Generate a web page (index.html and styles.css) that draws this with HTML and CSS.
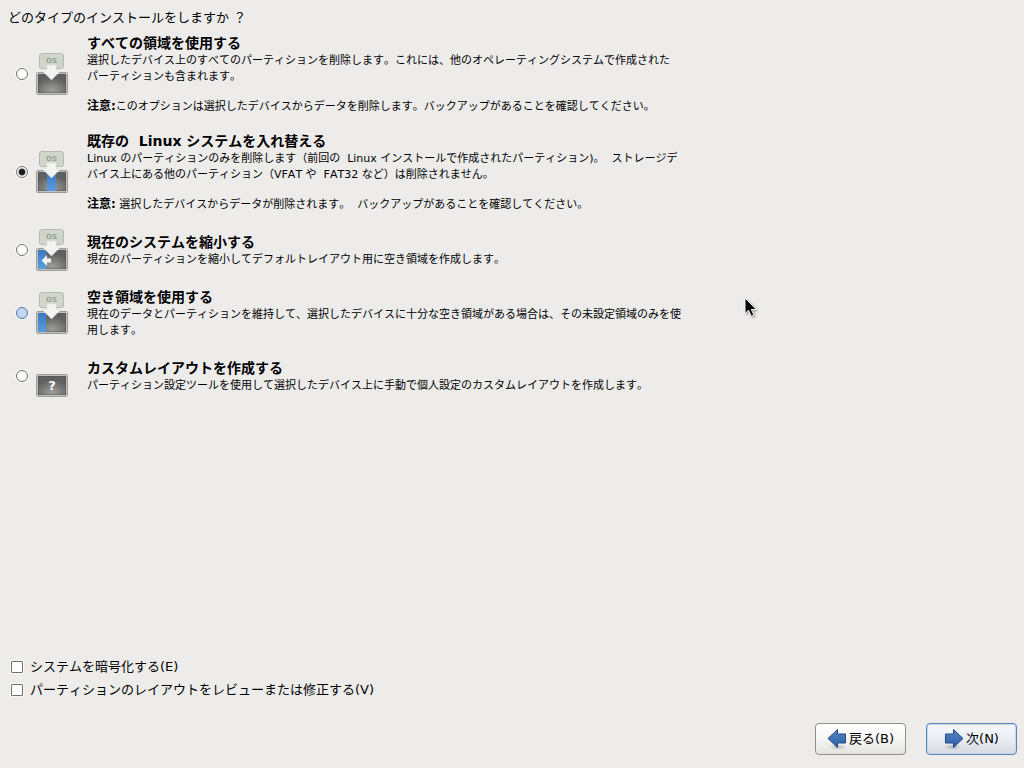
FILE: index.html
```html
<!DOCTYPE html>
<html lang="ja">
<head>
  <meta charset="UTF-8">
  <meta name="viewport" content="width=device-width, initial-scale=1.0">
  <title>インストールのタイプ</title>
  <link rel="stylesheet" href="styles.css">
</head>
<body>
  <!-- shared icon parts -->
  <svg class="defs" aria-hidden="true">
    <defs>
      <radialGradient id="disk-fill" cx="0.5" cy="0.85" r="0.65">
        <stop offset="0" stop-color="#9c9c9a"/>
        <stop offset="1" stop-color="#606060"/>
      </radialGradient>
      <linearGradient id="blue-fill" x1="0" y1="0" x2="0" y2="1">
        <stop offset="0" stop-color="#3a7ac0"/>
        <stop offset="1" stop-color="#5b9be0"/>
      </linearGradient>
      <linearGradient id="nav-fill" x1="0" y1="0" x2="0" y2="1">
        <stop offset="0" stop-color="#5585c2"/>
        <stop offset="1" stop-color="#2a5fa8"/>
      </linearGradient>
      <radialGradient id="nav-shadow">
        <stop offset="0" stop-color="#000" stop-opacity="0.22"/>
        <stop offset="1" stop-color="#000" stop-opacity="0"/>
      </radialGradient>
    </defs>
    <symbol id="disk" viewBox="0 0 32 42">
      <rect x="0.5" y="19.5" width="31" height="22" rx="1.5" fill="#f4f4f2" stroke="#9b9c98"/>
      <rect x="2" y="21" width="28" height="19" fill="url(#disk-fill)" stroke="#4c4c4c" stroke-width="0.6"/>
    </symbol>
    <symbol id="os" viewBox="0 0 32 42">
      <rect x="3.5" y="0.5" width="24" height="15" rx="2.5" fill="#d1d6cd" stroke="#b3bbae"/>
      <path d="M11 12h9v5.500h5L15.500 27 6 17.500h5z" fill="#f3f3f1" stroke="#dcdeda" stroke-width="0.5"/>
    </symbol>
  </svg>

  <main class="page">
    <h1 class="question">どのタイプのインストールをしますか ？</h1>

    <div class="options" role="radiogroup">
      <label class="option">
        <input type="radio" name="type" class="radio">
        <svg class="icon" viewBox="0 0 32 42"><use href="#disk"/><use href="#os"/><text x="15.5" y="10" text-anchor="middle" class="os-text">OS</text></svg>
        <span class="text">
          <span class="title">すべての領域を使用する</span>
          <span class="desc">選択したデバイス上のすべてのパーティションを削除します。これには、他のオペレーティングシステムで作成されたパーティションも含まれます。</span>
          <span class="note"><b>注意:</b>このオプションは選択したデバイスからデータを削除します。バックアップがあることを確認してください。</span>
        </span>
      </label>

      <label class="option">
        <input type="radio" name="type" class="radio" checked>
        <svg class="icon" viewBox="0 0 32 42"><use href="#disk"/><rect x="11" y="21" width="9" height="19" fill="url(#blue-fill)"/><use href="#os"/><text x="15.5" y="10" text-anchor="middle" class="os-text">OS</text></svg>
        <span class="text">
          <span class="title">既存の&nbsp; Linux システムを入れ替える</span>
          <span class="desc">Linux のパーティションのみを削除します（前回の&nbsp; Linux インストールで作成されたパーティション)。&nbsp; ストレージデバイス上にある他のパーティション（VFAT や&nbsp; FAT32 など）は削除されません。</span>
          <span class="note"><b>注意:</b> 選択したデバイスからデータが削除されます。&nbsp; バックアップがあることを確認してください。</span>
        </span>
      </label>

      <label class="option">
        <input type="radio" name="type" class="radio">
        <svg class="icon" viewBox="0 0 32 42"><use href="#disk"/><rect x="2" y="21" width="8" height="19" fill="url(#blue-fill)"/><use href="#os"/><text x="15.5" y="10" text-anchor="middle" class="os-text">OS</text><path d="M5.500 31.500l5.500-5.500v3.500h4v4h-4v3.500z" fill="#f4f4f2"/></svg>
        <span class="text">
          <span class="title">現在のシステムを縮小する</span>
          <span class="desc">現在のパーティションを縮小してデフォルトレイアウト用に空き領域を作成します。</span>
        </span>
      </label>

      <label class="option">
        <input type="radio" name="type" class="radio hover">
        <svg class="icon" viewBox="0 0 32 42"><use href="#disk"/><rect x="2" y="21" width="8" height="19" fill="url(#blue-fill)"/><use href="#os"/><text x="15.5" y="10" text-anchor="middle" class="os-text">OS</text></svg>
        <span class="text">
          <span class="title">空き領域を使用する</span>
          <span class="desc">現在のデータとパーティションを維持して、選択したデバイスに十分な空き領域がある場合は、その未設定領域のみを使用します。</span>
        </span>
      </label>

      <label class="option">
        <input type="radio" name="type" class="radio">
        <svg class="icon" viewBox="0 0 32 42"><use href="#disk"/><text x="16" y="35" text-anchor="middle" class="mark">?</text></svg>
        <span class="text">
          <span class="title">カスタムレイアウトを作成する</span>
          <span class="desc">パーティション設定ツールを使用して選択したデバイス上に手動で個人設定のカスタムレイアウトを作成します。</span>
        </span>
      </label>
    </div>

    <div class="checks">
      <label class="check"><input type="checkbox" class="box">システムを暗号化する(E)</label>
      <label class="check"><input type="checkbox" class="box">パーティションのレイアウトをレビューまたは修正する(V)</label>
    </div>

    <div class="buttons">
      <button type="button" class="btn">
        <svg class="arrow" viewBox="0 0 20 22"><ellipse cx="11" cy="19" rx="9" ry="3" fill="url(#nav-shadow)"/><path d="M1 10.5L10.5 1.5v4.5h8v9h-8v4.5z" fill="url(#nav-fill)" stroke="#204a87" stroke-linejoin="round"/></svg>戻る(B)
      </button>
      <button type="button" class="btn default">
        <svg class="arrow" viewBox="0 0 20 22"><ellipse cx="9" cy="19" rx="9" ry="3" fill="url(#nav-shadow)"/><path d="M19 10.5L9.5 1.5v4.5h-8v9h8v4.5z" fill="url(#nav-fill)" stroke="#204a87" stroke-linejoin="round"/></svg>次(N)
      </button>
    </div>
  </main>

  <svg class="pointer" viewBox="0 0 14 22" aria-hidden="true"><path d="M1 1v15.5l3.500-3.200 2.800 6 2.700-1.200-2.700-5.600h5z" fill="#000" stroke="#fff"/></svg>
</body>
</html>
```
FILE: styles.css
```css
* { box-sizing: border-box; }

body {
  margin: 0;
  background: #edeceb;
  color: #000;
  font: 13px/20px "DejaVu Sans", "Noto Sans CJK JP", sans-serif;
  font-kerning: none;
  text-spacing-trim: space-all;
}

.defs { position: absolute; width: 0; height: 0; }

.page {
  display: flex;
  flex-direction: column;
  min-height: 100vh;
  padding: 8px 7px 13px 8px;
}

.question { margin: 0; font-size: 13px; font-weight: normal; }

/* install types */
.options {
  display: flex;
  flex-direction: column;
  gap: 16px;
  margin-top: 5px;
  padding-left: 8px;
}
.option { display: flex; align-items: center; }
.radio {
  appearance: none;
  flex: none;
  width: 12px;
  height: 12px;
  margin: 0;
  border: 1px solid #6f6f6b;
  border-radius: 50%;
  background: #fff;
  box-shadow: 0 0 0 1px #f8f8f7;
}
.radio:checked { background: radial-gradient(circle, #1a1a1a 0 2px, #333 3px, #fff 4px); }
.radio.hover { border-color: #4a74ae; background: #c3d7f0; }
.icon { flex: none; width: 32px; height: 42px; margin: 0 19px 0 8px; }
.os-text { font: bold 7px "DejaVu Sans", sans-serif; fill: #9aa395; }
.mark { font: bold 13px "DejaVu Sans", sans-serif; fill: #fff; }

.text { max-width: 596px; font-size: 11px; line-height: 16px; line-break: strict; }
.title, .desc, .note { display: block; }
.title { font-size: 14px; font-weight: bold; line-height: 20px; }
.note { margin-top: 14px; }
.note b { font-size: 12px; line-height: 12px; }

/* bottom options */
.checks {
  display: flex;
  flex-direction: column;
  gap: 6px;
  margin-top: auto;
  padding-left: 3px;
}
.check { display: flex; align-items: center; gap: 7px; line-height: 17px; }
.box {
  appearance: none;
  width: 12px;
  height: 12px;
  margin: 0;
  border: 1px solid #6f6f6b;
  border-radius: 1px;
  background: #fff;
  box-shadow: 0 0 0 1px #f8f8f7;
}

.buttons {
  display: flex;
  justify-content: flex-end;
  gap: 20px;
  margin-top: 25px;
}
.btn {
  display: flex;
  align-items: center;
  justify-content: center;
  gap: 2px;
  width: 91px;
  height: 32px;
  padding: 0;
  border: 1px solid #8f8f8c;
  border-radius: 4px;
  background: linear-gradient(#fff, #f6f6f5 50%, #e3e3e1);
  color: #000;
  font: inherit;
}
.btn.default {
  border-color: #5b83b8;
  background: linear-gradient(#f6f8fb, #e9edf2 50%, #d6dae1);
  box-shadow: inset 0 0 0 1px #c6d8ee;
}
.arrow { width: 20px; height: 22px; }

/* mouse pointer */
.pointer {
  position: absolute;
  left: 744px;
  top: 297px;
  width: 14px;
  height: 22px;
  filter: drop-shadow(1px 1px 1px #0006);
}
```
